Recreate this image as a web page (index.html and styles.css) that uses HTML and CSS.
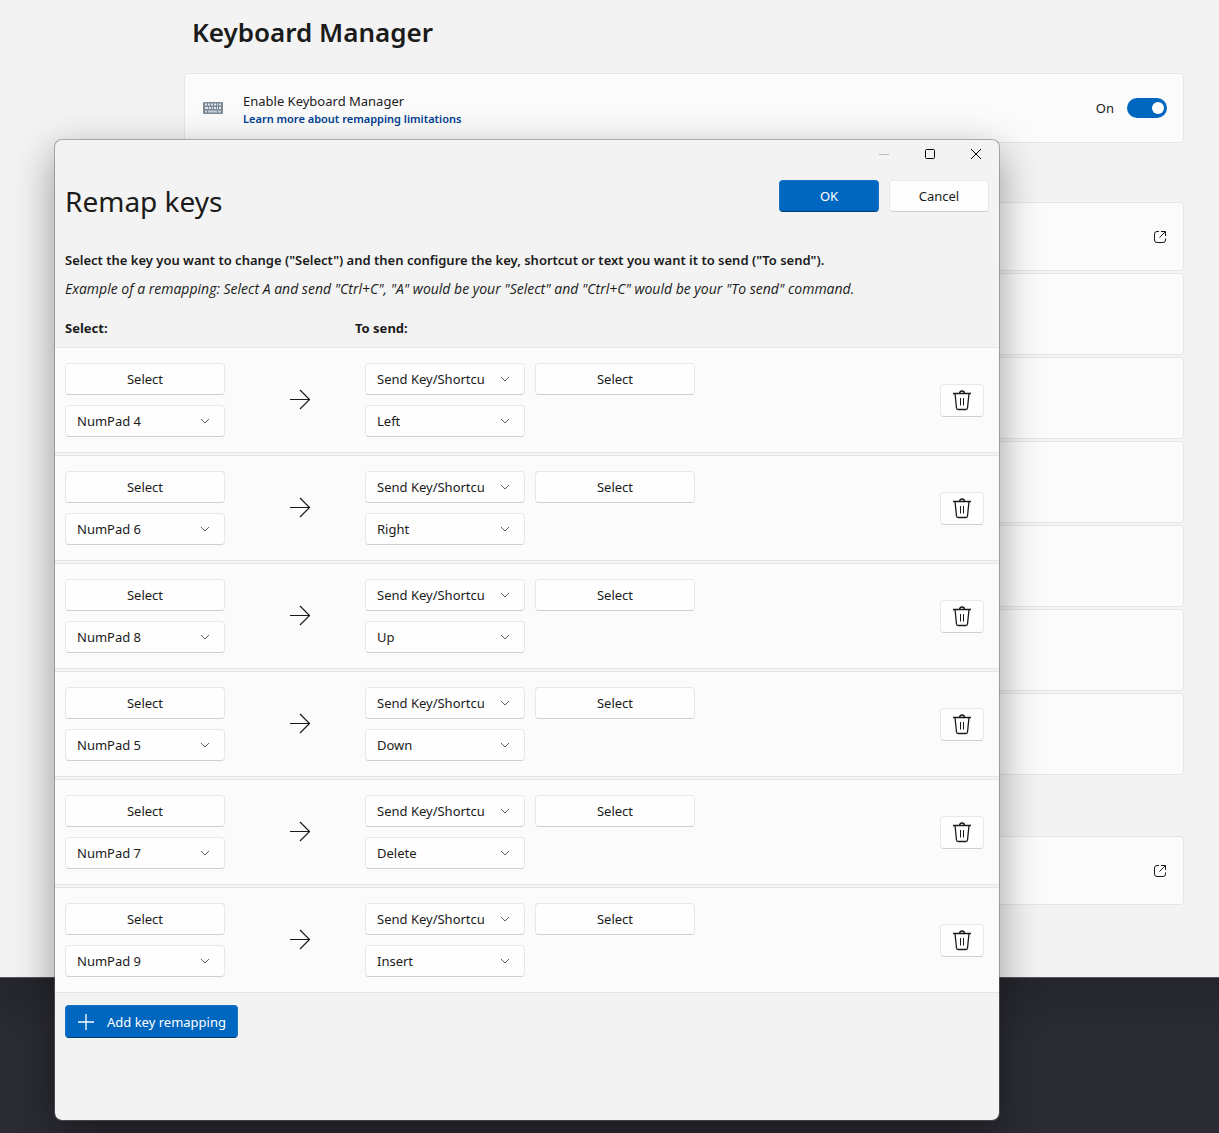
FILE: index.html
```html
<!DOCTYPE html>
<html lang="en">
<head>
    <meta charset="UTF-8">
    <meta name="viewport" content="width=device-width, initial-scale=1.0">
    <title>Keyboard Manager</title>
    <link rel="stylesheet" href="styles.css">
</head>
<body>
    <svg class="sprite" aria-hidden="true">
        <symbol id="arrow" viewBox="0 0 22 22">
            <path d="M1 10.5H21M11 1l9.5 9.5L11 20" fill="none" stroke="currentColor" stroke-width="1.2"/>
        </symbol>
        <symbol id="trash" viewBox="0 0 20 22">
            <path d="M1 4.500H19M3 4.500L4.500 19q.2 1.500 1.600 1.500h7.800q1.400 0 1.600-1.500L17 4.500M7.500 4.500q0-2.500 2.500-2.500t2.500 2.500" fill="none" stroke="currentColor" stroke-width="1.300"/>
            <path d="M8.500 9v7.500M11.500 9v7.500" fill="none" stroke="currentColor"/>
        </symbol>
        <symbol id="open" viewBox="0 0 14 14">
            <path d="M6 1.500H4Q1.500 1.500 1.500 4v6Q1.500 12.500 4 12.500h6Q12.500 12.500 12.500 10V8.500M8 1.500h4.500V6M12.500 1.500L6.500 7.500" fill="none" stroke="currentColor"/>
        </symbol>
    </svg>

    <main class="settings">
        <h1>Keyboard Manager</h1>
        <section class="card enable">
            <svg class="keyboard" viewBox="0 0 20 14" aria-hidden="true">
                <rect x="0" y="1" width="20" height="12" rx="1" fill="#7d8995"/>
                <path d="M2 3.500h2M5 3.500h2M8 3.500h2M11 3.500h2M14 3.500h1M16 3.500h2M2 7h3M6 7h2M9 7h1M11 7h2M14 7h1M16 7h2" stroke="#dce7f1" stroke-width="2"/>
                <path d="M2 10.500h2M5 10.500h9M15 10.500h3" stroke="#c3d0dc" stroke-width="2"/>
            </svg>
            <div class="card-text">
                <label for="enable">Enable Keyboard Manager</label>
                <a href="#limitations">Learn more about remapping limitations</a>
            </div>
            <span class="state">On</span>
            <input class="toggle" type="checkbox" role="switch" id="enable" checked>
        </section>

        <section class="group">
            <a class="card" href="#keys" aria-label="Remap a key"><svg class="open"><use href="#open"/></svg></a>
            <div class="card tall"></div>
            <div class="card tall"></div>
            <div class="card tall"></div>
            <div class="card tall"></div>
            <div class="card tall"></div>
            <div class="card tall"></div>
        </section>

        <section class="group">
            <a class="card" href="#shortcuts" aria-label="Remap a shortcut"><svg class="open"><use href="#open"/></svg></a>
        </section>
    </main>

    <div class="dialog" role="dialog" aria-labelledby="dialog-title">
        <div class="titlebar">
            <button type="button" aria-label="Minimize" disabled><svg viewBox="0 0 12 12"><path d="M1 6.500h10"/></svg></button>
            <button type="button" aria-label="Maximize"><svg viewBox="0 0 12 12"><rect x="1.500" y="1.500" width="9" height="9" rx="1"/></svg></button>
            <button type="button" aria-label="Close"><svg viewBox="0 0 12 12"><path d="M1 1l10 10M11 1L1 11"/></svg></button>
        </div>

        <header>
            <h2 id="dialog-title">Remap keys</h2>
            <button type="button" class="btn primary">OK</button>
            <button type="button" class="btn">Cancel</button>
        </header>

        <p class="intro">Select the key you want to change ("Select") and then configure the key, shortcut or text you want it to send ("To send").</p>
        <p class="example">Example of a remapping: Select A and send "Ctrl+C", "A" would be your "Select" and "Ctrl+C" would be your "To send" command.</p>

        <div class="columns">
            <h3>Select:</h3>
            <h3>To send:</h3>
        </div>

        <ul class="rows">
            <li>
                <div class="stack">
                    <button type="button" class="btn">Select</button>
                    <select aria-label="Key"><option>NumPad 4</option></select>
                </div>
                <svg class="arrow"><use href="#arrow"/></svg>
                <div class="stack">
                    <select aria-label="Action"><option>Send Key/Shortcu</option></select>
                    <select aria-label="Key to send"><option>Left</option></select>
                </div>
                <button type="button" class="btn pick">Select</button>
                <button type="button" class="btn delete" aria-label="Delete"><svg><use href="#trash"/></svg></button>
            </li>
            <li>
                <div class="stack">
                    <button type="button" class="btn">Select</button>
                    <select aria-label="Key"><option>NumPad 6</option></select>
                </div>
                <svg class="arrow"><use href="#arrow"/></svg>
                <div class="stack">
                    <select aria-label="Action"><option>Send Key/Shortcu</option></select>
                    <select aria-label="Key to send"><option>Right</option></select>
                </div>
                <button type="button" class="btn pick">Select</button>
                <button type="button" class="btn delete" aria-label="Delete"><svg><use href="#trash"/></svg></button>
            </li>
            <li>
                <div class="stack">
                    <button type="button" class="btn">Select</button>
                    <select aria-label="Key"><option>NumPad 8</option></select>
                </div>
                <svg class="arrow"><use href="#arrow"/></svg>
                <div class="stack">
                    <select aria-label="Action"><option>Send Key/Shortcu</option></select>
                    <select aria-label="Key to send"><option>Up</option></select>
                </div>
                <button type="button" class="btn pick">Select</button>
                <button type="button" class="btn delete" aria-label="Delete"><svg><use href="#trash"/></svg></button>
            </li>
            <li>
                <div class="stack">
                    <button type="button" class="btn">Select</button>
                    <select aria-label="Key"><option>NumPad 5</option></select>
                </div>
                <svg class="arrow"><use href="#arrow"/></svg>
                <div class="stack">
                    <select aria-label="Action"><option>Send Key/Shortcu</option></select>
                    <select aria-label="Key to send"><option>Down</option></select>
                </div>
                <button type="button" class="btn pick">Select</button>
                <button type="button" class="btn delete" aria-label="Delete"><svg><use href="#trash"/></svg></button>
            </li>
            <li>
                <div class="stack">
                    <button type="button" class="btn">Select</button>
                    <select aria-label="Key"><option>NumPad 7</option></select>
                </div>
                <svg class="arrow"><use href="#arrow"/></svg>
                <div class="stack">
                    <select aria-label="Action"><option>Send Key/Shortcu</option></select>
                    <select aria-label="Key to send"><option>Delete</option></select>
                </div>
                <button type="button" class="btn pick">Select</button>
                <button type="button" class="btn delete" aria-label="Delete"><svg><use href="#trash"/></svg></button>
            </li>
            <li>
                <div class="stack">
                    <button type="button" class="btn">Select</button>
                    <select aria-label="Key"><option>NumPad 9</option></select>
                </div>
                <svg class="arrow"><use href="#arrow"/></svg>
                <div class="stack">
                    <select aria-label="Action"><option>Send Key/Shortcu</option></select>
                    <select aria-label="Key to send"><option>Insert</option></select>
                </div>
                <button type="button" class="btn pick">Select</button>
                <button type="button" class="btn delete" aria-label="Delete"><svg><use href="#trash"/></svg></button>
            </li>
        </ul>

        <button type="button" class="btn primary add">
            <svg viewBox="0 0 18 18"><path d="M9 1v16M1 9h16" stroke="currentColor" stroke-width="1.300"/></svg>
            Add key remapping
        </button>
    </div>
</body>
</html>
```

FILE: styles.css
```css
* {
    box-sizing: border-box;
}

body {
    margin: 0;
    min-height: 100vh;
    position: relative;
    overflow: hidden;
    background: linear-gradient(#25252d 977px, #2b2b34 1040px);
    font-family: "Noto Sans", "Open Sans", sans-serif;
    font-size: 13px;
    line-height: 18px;
    color: #1b1b1b;
}

h1, h2, h3, p, ul {
    margin: 0;
    padding: 0;
}

.sprite {
    display: none;
}

/* settings page */
.settings {
    padding: 12px 35px 72px 184px;
    background-color: #f3f3f3;
    border-bottom: 1px solid #55555c;
}

h1 {
    padding-left: 8px;
    margin-bottom: 21px;
    font-size: 26px;
    line-height: 40px;
    font-weight: 600;
}

.card {
    display: flex;
    align-items: center;
    height: 69px;
    padding: 0 16px 0 18px;
    background-color: #fbfbfb;
    border: 1px solid #e5e5e5;
    border-radius: 4px;
    color: inherit;
}

.enable {
    height: 70px;
}

.tall {
    height: 82px;
}

.group {
    display: flex;
    flex-direction: column;
    gap: 2px;
    margin-top: 59px;
}

.group + .group {
    margin-top: 61px;
}

.keyboard {
    width: 20px;
    height: 14px;
    margin-right: 20px;
}

.card-text {
    display: flex;
    flex-direction: column;
    flex: 1;
    padding-top: 3px;
}

.card-text a {
    font-size: 11px;
    font-weight: 600;
    color: #003e92;
    text-decoration: none;
}

.state {
    margin-right: 13px;
}

.toggle {
    appearance: none;
    width: 40px;
    height: 20px;
    margin: 0;
    padding: 4px 3px;
    display: flex;
    justify-content: flex-end;
    background-color: #0067c0;
    border-radius: 10px;
}

.toggle::before {
    content: "";
    width: 12px;
    height: 12px;
    background-color: #fff;
    border-radius: 50%;
}

.open {
    width: 14px;
    height: 14px;
    margin-left: auto;
}

/* remap window, floats over the settings page */
.dialog {
    position: absolute;
    top: 139px;
    left: 54px;
    right: 219px;
    bottom: 12px;
    background-color: #f3f3f3;
    background-clip: padding-box;
    border: 1px solid rgba(110, 110, 110, 0.5);
    border-radius: 8px;
    box-shadow: 0 14px 40px rgba(0, 0, 0, 0.38);
}

.titlebar {
    display: flex;
    justify-content: flex-end;
}

.titlebar button {
    width: 46px;
    height: 28px;
    padding: 0;
    display: grid;
    place-items: center;
    background: none;
    border: 0;
    color: #000;
}

.titlebar button:disabled {
    color: #bbb;
}

.titlebar svg {
    width: 12px;
    height: 12px;
    fill: none;
    stroke: currentColor;
}

header {
    display: flex;
    gap: 10px;
    padding: 12px 10px 0;
}

h2 {
    flex: 1;
    font-size: 28px;
    line-height: 42px;
    font-weight: 400;
}

.btn, select {
    height: 32px;
    padding: 0 11px;
    background-color: #fefefe;
    border: 1px solid #e8e8e8;
    border-bottom-color: #cfcfcf;
    border-radius: 4px;
    font: inherit;
    color: inherit;
}

.primary {
    background-color: #0067c0;
    border-color: #1473c5;
    border-bottom-color: #003e73;
    color: #fff;
}

header .btn {
    width: 100px;
}

.intro, .example {
    padding: 0 10px;
}

.intro {
    margin-top: 29px;
    font-weight: 600;
}

.example {
    margin-top: 11px;
    font-family: "Open Sans", "Noto Sans", sans-serif;
    font-size: 14px;
    font-style: italic;
}

.columns {
    display: grid;
    grid-template-columns: 290px 1fr;
    padding: 0 10px;
    margin: 21px 0 10px;
}

h3 {
    font-size: 13px;
    font-weight: 700;
}

.rows {
    display: flex;
    flex-direction: column;
    gap: 2px;
    list-style: none;
}

.rows li {
    display: flex;
    align-items: center;
    padding: 15px 15px 15px 10px;
    background-color: #fbfbfb;
    border: solid #e5e5e5;
    border-width: 1px 0;
}

.stack {
    display: flex;
    flex-direction: column;
    gap: 10px;
    width: 160px;
}

select {
    appearance: none;
    background-image: url("data:image/svg+xml,%3Csvg xmlns='http://www.w3.org/2000/svg' width='10' height='6'%3E%3Cpath d='M1 1l4 4 4-4' fill='none' stroke='%23606060'/%3E%3C/svg%3E");
    background-repeat: no-repeat;
    background-position: right 14px center;
}

.arrow {
    width: 22px;
    height: 22px;
    margin: 0 54px 0 64px;
}

.pick {
    width: 160px;
    margin-left: 10px;
    align-self: flex-start;
}

.delete {
    width: 44px;
    height: 33px;
    margin-left: auto;
    padding: 0;
    display: grid;
    place-items: center;
}

.delete svg {
    width: 20px;
    height: 22px;
}

.add {
    display: flex;
    align-items: center;
    gap: 12px;
    height: 33px;
    margin: 12px 10px;
}

.add svg {
    width: 18px;
    height: 18px;
}
```
